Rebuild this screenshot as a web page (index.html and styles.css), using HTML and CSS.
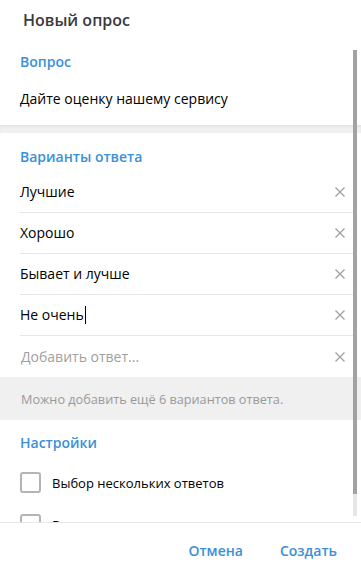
FILE: index.html
```html
<!DOCTYPE html>
<html lang="ru">
<head>
<meta charset="utf-8">
<link rel="stylesheet" href="styles.css">
</head>
<body>
<div class="dialog">
  <div class="title">Новый опрос</div>
  <div class="scroll">
    <div class="content">
      <div class="section question-section">
        <div class="label">Вопрос</div>
        <div class="question">Дайте оценку нашему сервису</div>
      </div>
      <div class="sep"></div>
      <div class="section">
        <div class="label">Варианты ответа</div>
        <div class="options">
          <div class="opt"><span class="opt-text">Лучшие</span><svg class="x" viewBox="0 0 10 10"><path d="M0.5 0.5L9.5 9.5M9.5 0.5L0.5 9.5"/></svg></div>
          <div class="opt"><span class="opt-text">Хорошо</span><svg class="x" viewBox="0 0 10 10"><path d="M0.5 0.5L9.5 9.5M9.5 0.5L0.5 9.5"/></svg></div>
          <div class="opt"><span class="opt-text">Бывает и лучше</span><svg class="x" viewBox="0 0 10 10"><path d="M0.5 0.5L9.5 9.5M9.5 0.5L0.5 9.5"/></svg></div>
          <div class="opt"><span class="opt-text">Не очень<span class="caret"></span></span><svg class="x" viewBox="0 0 10 10"><path d="M0.5 0.5L9.5 9.5M9.5 0.5L0.5 9.5"/></svg></div>
          <div class="opt"><span class="opt-text placeholder">Добавить ответ...</span><svg class="x" viewBox="0 0 10 10"><path d="M0.5 0.5L9.5 9.5M9.5 0.5L0.5 9.5"/></svg></div>
        </div>
      </div>
      <div class="hint">Можно добавить ещё 6 вариантов ответа.</div>
      <div class="section">
        <div class="label">Настройки</div>
        <div class="checks">
          <div class="check"><span class="box"></span><span>Выбор нескольких ответов</span></div>
          <div class="check"><span class="box"></span><span>Викторина</span></div>
        </div>
      </div>
    </div>
    <div class="scrollbar"><div class="thumb"></div></div>
  </div>
  <div class="footer">
    <span class="btn">Отмена</span>
    <span class="btn">Создать</span>
  </div>
</div>
</body>
</html>
```

FILE: styles.css
```css
* { box-sizing: border-box; }
html, body { margin: 0; padding: 0; background: #fff; }
body {
  font-family: "Open Sans", "Liberation Sans", sans-serif;
  font-size: 14px;
  color: #000;
}
.dialog {
  width: 361px;
  height: 576px;
  display: flex;
  flex-direction: column;
  overflow: hidden;
  background: #fff;
}
.title {
  flex: none;
  height: 42px;
  padding: 9px 0 0 23px;
  font-size: 16px;
  line-height: 22px;
  font-weight: 600;
  color: #3a3a3a;
}
.scroll {
  position: relative;
  flex: none;
  height: 480px;
  overflow: hidden;
}
.content { display: flex; flex-direction: column; }
.section { padding: 0 0 0 20px; }
.label {
  color: #3a90d8;
  font-weight: 600;
  font-size: 14px;
  line-height: 20px;
  padding-top: 10px;
}
.question {
  padding-top: 17px;
  padding-bottom: 16px;
  line-height: 20px;
}
.sep {
  height: 8px;
  background: #f0f0f0;
  box-shadow: inset 0 2px 2px rgba(0,0,0,0.05);
}
.sep + .section .label { padding-top: 14px; }
.options { margin-top: 5px; margin-right: 8px; }
.opt {
  height: 41px;
  display: flex;
  align-items: center;
  justify-content: space-between;
  border-bottom: 1px solid #e6e6e6;
  padding-right: 8px;
}
.opt:last-child { border-bottom: none; }
.opt-text { line-height: 20px; display: flex; align-items: center; }
.placeholder { color: #a0a0a0; padding-left: 1px; }
.caret {
  display: inline-block;
  width: 1px;
  height: 18px;
  background: #000;
  margin-left: 1px;
}
.x { width: 10px; height: 10px; }
.x path { stroke: #a3a3a3; stroke-width: 1.4; fill: none; }
.hint {
  height: 43px;
  background: #f0f0f0;
  display: flex;
  align-items: center;
  padding-left: 21px;
  font-size: 12.7px;
  color: #999;
}
.hint + .section .label { padding-top: 13px; }
.checks { margin-top: 19px; display: flex; flex-direction: column; gap: 21px; }
.check {
  display: flex;
  align-items: center;
  gap: 11px;
  height: 21px;
  font-size: 13px;
}
.box {
  width: 21px;
  height: 21px;
  border: 2px solid #b4b4b4;
  border-radius: 3px;
  flex: none;
}
.scrollbar {
  position: absolute;
  right: 4px;
  top: 8px;
  width: 4px;
  height: 466px;
  background: #e6e6e6;
}
.thumb { height: 444px; background: #a2a2a2; }
.footer {
  flex: 1;
  border-top: 1px solid #e6e6e6;
  display: flex;
  justify-content: flex-end;
  align-items: center;
  gap: 37px;
  padding: 2px 24px 0 0;
}
.btn {
  color: #3a90d8;
  font-weight: 600;
  font-size: 14px;
}
```
